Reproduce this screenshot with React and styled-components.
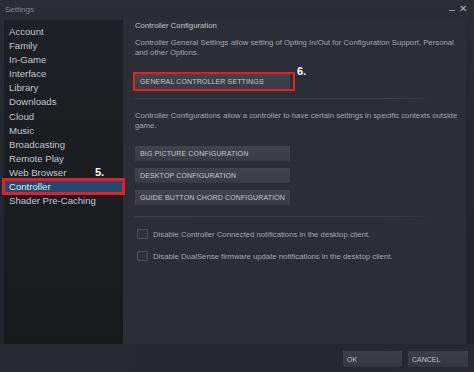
import React from 'react';
import styled, { createGlobalStyle } from 'styled-components';

const GlobalStyle = createGlobalStyle`
	html, body {
		margin: 0;
		padding: 0;
		background: #23262c;
	}
	* {
		box-sizing: border-box;
	}
`;

const Window = styled.div`
	width: 474px;
	height: 372px;
	display: flex;
	flex-direction: column;
	overflow: hidden;
	background: linear-gradient(180deg, #2a2d34 0%, #23262c 40%, #202329 100%);
	font-family: 'Liberation Sans', Arial, sans-serif;
`;

const TitleBar = styled.div`
	height: 20px;
	display: flex;
	align-items: center;
	justify-content: space-between;
	padding: 0 7px 2px 5px;
	color: #868a91;
	font-size: 8px;
`;

const WindowControls = styled.div`
	display: flex;
	align-items: center;
	gap: 4px;
	color: #b4b7bc;
	font-size: 10px;
	line-height: 1;
`;

const Minimize = styled.span`
	width: 6px;
	height: 1px;
	margin-top: 2px;
	background: #9a9da3;
`;

const Body = styled.div`
	flex: 1;
	display: flex;
	padding: 0 8px 0 4px;
	min-height: 0;
`;

const Sidebar = styled.nav`
	width: 119px;
	display: flex;
	flex-direction: column;
	padding-top: 4px;
	background: linear-gradient(180deg, #1e2025 0%, #1a1c20 50%, #17191c 100%);
`;

const NavItem = styled.div`
	position: relative;
	height: 14.17px;
	display: flex;
	align-items: center;
	padding-left: 5px;
	font-size: 9.6px;
	color: ${(p) => (p.$active ? '#e3e7ec' : '#c3c7cd')};
	background: ${(p) => (p.$active ? '#27476c' : 'transparent')};

	${(p) =>
		p.$active &&
		`
		&::after {
			content: '';
			position: absolute;
			left: -2px;
			right: -2px;
			top: -2px;
			bottom: -1px;
			border: 3px solid #e0202a;
		}
	`}
`;

const Marker = styled.span`
	position: absolute;
	left: ${(p) => p.$left}px;
	top: ${(p) => p.$top}px;
	color: #ffffff;
	font-size: 11px;
	font-weight: 700;
	line-height: 1;
	z-index: 2;
`;

const Panel = styled.section`
	flex: 1;
	background: #2b2e35;
	padding: 0 0 0 12px;
	overflow: hidden;
	color: #a3a7ae;
	font-size: 7.75px;
	white-space: nowrap;
`;

const Heading = styled.div`
	height: 10px;
	display: flex;
	align-items: center;
	margin-top: 0;
	color: #c2c5ca;
	font-size: 7.75px;
`;

const Description = styled.p`
	margin: ${(p) => p.$mt}px 0 0;
	line-height: 9.7px;
`;

const Highlight = styled.div`
	position: relative;
	width: 162px;
	margin: 15px 0 0 -2px;
	padding: 2px;
	outline: 2.5px solid #e0202a;
	outline-offset: -2.5px;
`;

const ActionButton = styled.div`
	width: 155px;
	height: 15px;
	display: flex;
	align-items: center;
	padding-left: 5px;
	margin-top: ${(p) => p.$mt || 0}px;
	background: linear-gradient(180deg, #41444c 0%, #393c43 100%);
	color: #c4c7cc;
	font-size: 7px;
	letter-spacing: 0.02em;
`;

const Divider = styled.hr`
	width: 297px;
	margin: ${(p) => p.$mt}px 0 0;
	border: 0;
	height: 1px;
	background: linear-gradient(90deg, #40434a 0%, #3f4249 85%, rgba(63, 66, 73, 0) 100%);
`;

const CheckRow = styled.label`
	display: flex;
	align-items: center;
	gap: 5px;
	margin: ${(p) => p.$mt}px 0 0 2px;
	height: 11px;
`;

const CheckBox = styled.span`
	width: 11px;
	height: 10px;
	border: 1px solid #4b4e56;
	background: #2f3239;
`;

const Footer = styled.footer`
	height: 28px;
	display: flex;
	justify-content: flex-end;
	align-items: flex-start;
	gap: 6px;
	padding: 7px 6px 0 0;
	background: linear-gradient(90deg, #262930 0%, #24272d 60%, #262930 100%);
`;

const FooterButton = styled.div`
	width: ${(p) => p.$w}px;
	height: 16px;
	display: flex;
	align-items: center;
	padding-left: 4px;
	background: linear-gradient(180deg, #3c3f47 0%, #34373e 100%);
	color: #c0c3c9;
	font-size: 7px;
`;

const navItems = [
	'Account',
	'Family',
	'In-Game',
	'Interface',
	'Library',
	'Downloads',
	'Cloud',
	'Music',
	'Broadcasting',
	'Remote Play',
	'Web Browser',
	'Controller',
	'Shader Pre-Caching',
];

const configButtons = ['BIG PICTURE CONFIGURATION', 'DESKTOP CONFIGURATION', 'GUIDE BUTTON CHORD CONFIGURATION'];

function App() {
	return (
		<>
			<GlobalStyle />
			<Window>
				<TitleBar>
					<span>Settings</span>
					<WindowControls>
						<Minimize />
						<span>✕</span>
					</WindowControls>
				</TitleBar>

				<Body>
					<Sidebar>
						{navItems.map((item) => (
							<NavItem key={item} $active={item === 'Controller'}>
								{item}
								{item === 'Controller' && (
									<Marker $left={91} $top={-13}>
										5.
									</Marker>
								)}
							</NavItem>
						))}
					</Sidebar>

					<Panel>
						<Heading>Controller Configuration</Heading>
						<Description $mt={8}>
							Controller General Settings allow setting of Opting In/Out for Configuration Support, Personal
							<br />
							and other Options.
						</Description>

						<Highlight>
							<ActionButton>GENERAL CONTROLLER SETTINGS</ActionButton>
							<Marker $left={164} $top={-6}>
								6.
							</Marker>
						</Highlight>

						<Divider $mt={7} />

						<Description $mt={12}>
							Controller Configurations allow a controller to have certain settings in specific contexts outside
							<br />
							game.
						</Description>

						{configButtons.map((label, i) => (
							<ActionButton key={label} $mt={i === 0 ? 15 : 7}>
								{label}
							</ActionButton>
						))}

						<Divider $mt={11} />

						<CheckRow $mt={12}>
							<CheckBox />
							Disable Controller Connected notifications in the desktop client.
						</CheckRow>
						<CheckRow $mt={11}>
							<CheckBox />
							Disable DualSense firmware update notifications in the desktop client.
						</CheckRow>
					</Panel>
				</Body>

				<Footer>
					<FooterButton $w={59}>OK</FooterButton>
					<FooterButton $w={60}>CANCEL</FooterButton>
				</Footer>
			</Window>
		</>
	);
}

export default App;
